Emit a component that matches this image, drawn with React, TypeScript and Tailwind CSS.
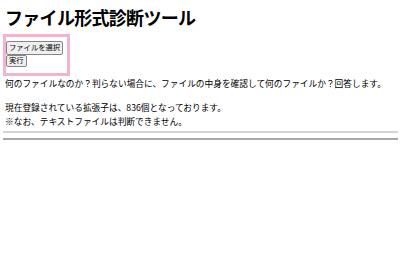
export default function App() {
  return (
    <div className="min-h-screen bg-white px-[5px] text-black" style={{ fontFamily: '"Noto Sans CJK JP", "Noto Sans", sans-serif' }}>
      <h1 className="pt-[6px] text-[18px] font-bold leading-[22px] tracking-[-0.7px]">ファイル形式診断ツール</h1>

      <div className="mt-[6px] ml-[-2px] w-[67px] border-[3px] border-[#f5b3d0] pt-[4px] pb-[6px]">
        <button className="flex h-[14px] items-center whitespace-nowrap rounded-[2px] border border-[#858585] bg-[#efefef] px-[2px] text-[7.3px] leading-none">
          ファイルを選択
        </button>
        <button className="flex h-[12px] items-center whitespace-nowrap rounded-[2px] border border-[#858585] bg-[#efefef] px-[2px] text-[7.3px] leading-none">
          実行
        </button>
      </div>

      <p className="mt-[2px] text-[8.7px] leading-[12px]">
        何のファイルなのか？判らない場合に、ファイルの中身を確認して何のファイルか？回答します。
      </p>
      <p className="mt-[11px] text-[8.7px] leading-[14px]">
        現在登録されている拡張子は、836個となっております。
        <br />
        ※なお、テキストファイルは判断できません。
      </p>

      <div className="mt-[2px] mr-[-3px] ml-[-2px] h-[2px] bg-[#d4d4d4]" />
      <div className="mt-[5px] mr-[-3px] ml-[-2px] h-[2px] bg-[#a8a8a8]" />
    </div>
  );
}
